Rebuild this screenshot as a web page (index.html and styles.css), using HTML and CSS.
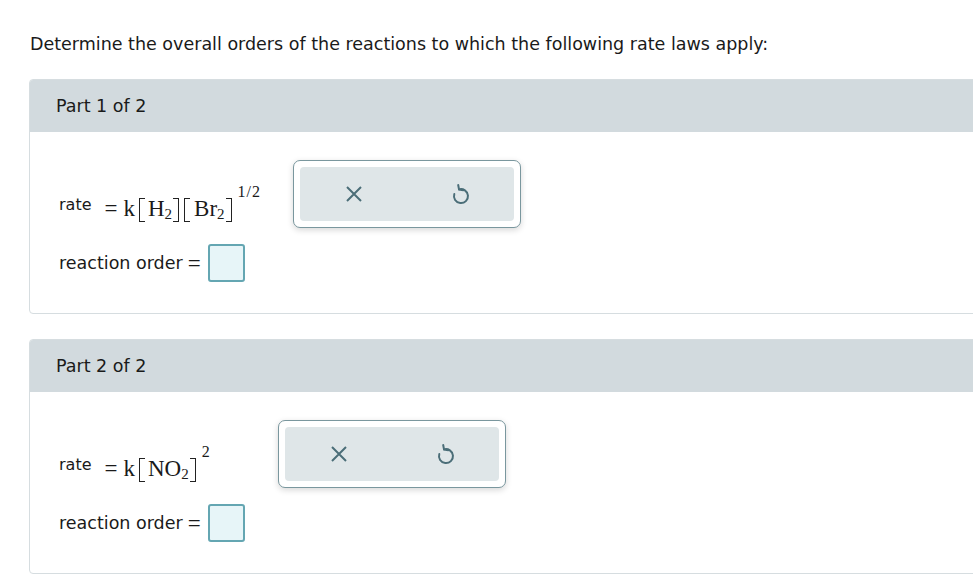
FILE: index.html
```html
<!DOCTYPE html>
<html lang="en">
<head>
<meta charset="utf-8">
<title>Rate laws</title>
<link rel="stylesheet" href="styles.css">
</head>
<body>
<main class="page">
  <p class="prompt">Determine the overall orders of the reactions to which the following rate laws apply:</p>

  <section class="part">
    <header class="part-head">Part 1 of 2</header>
    <div class="part-body">
      <div class="rate-row">
        <div class="expr expr-one">
          <span class="label">rate</span>
          <span class="math"><span class="mo">=</span><span class="mi k">k</span><span class="br br-l"></span><span class="mi">H</span><span class="sub">2</span><span class="br br-r"></span><span class="br br-l br-next"></span><span class="mi">Br</span><span class="sub">2</span><span class="br br-r"></span><span class="sup">1/2</span></span>
        </div>
        <div class="tools">
          <div class="tools-inner">
            <button class="tool" type="button" aria-label="Clear">
              <svg viewBox="0 0 24 24" width="24" height="24"><path d="M5 5 L19 19 M19 5 L5 19" fill="none" stroke="#4b6e78" stroke-width="2"/></svg>
            </button>
            <button class="tool" type="button" aria-label="Reset">
              <svg viewBox="0 0 24 24" width="24" height="24"><path d="M10 7.4 A7 7 0 1 1 5.3 12" fill="none" stroke="#4b6e78" stroke-width="2" stroke-linecap="round"/><path d="M9.2 3 L10 7.4 L14.3 8.2" fill="none" stroke="#4b6e78" stroke-width="2" stroke-linecap="round" stroke-linejoin="round"/></svg>
            </button>
          </div>
        </div>
      </div>
      <div class="answer-row">
        <span class="label">reaction order</span><span class="eq">=</span><span class="answer-box"></span>
      </div>
    </div>
  </section>

  <section class="part">
    <header class="part-head">Part 2 of 2</header>
    <div class="part-body">
      <div class="rate-row">
        <div class="expr expr-two">
          <span class="label">rate</span>
          <span class="math"><span class="mo">=</span><span class="mi k">k</span><span class="br br-l"></span><span class="mi">NO</span><span class="sub">2</span><span class="br br-r"></span><span class="sup">2</span></span>
        </div>
        <div class="tools">
          <div class="tools-inner">
            <button class="tool" type="button" aria-label="Clear">
              <svg viewBox="0 0 24 24" width="24" height="24"><path d="M5 5 L19 19 M19 5 L5 19" fill="none" stroke="#4b6e78" stroke-width="2"/></svg>
            </button>
            <button class="tool" type="button" aria-label="Reset">
              <svg viewBox="0 0 24 24" width="24" height="24"><path d="M10 7.4 A7 7 0 1 1 5.3 12" fill="none" stroke="#4b6e78" stroke-width="2" stroke-linecap="round"/><path d="M9.2 3 L10 7.4 L14.3 8.2" fill="none" stroke="#4b6e78" stroke-width="2" stroke-linecap="round" stroke-linejoin="round"/></svg>
            </button>
          </div>
        </div>
      </div>
      <div class="answer-row">
        <span class="label">reaction order</span><span class="eq">=</span><span class="answer-box"></span>
      </div>
    </div>
  </section>
</main>
</body>
</html>
```

FILE: styles.css
```css
html, body {
  margin: 0;
  padding: 0;
  background: #ffffff;
  overflow: hidden;
}

body {
  font-family: "DejaVu Sans", Verdana, sans-serif;
  font-size: 17.5px;
  color: #1a1a1a;
}

.page {
  padding: 34px 0 0 29px;
}

.prompt {
  margin: 0 0 24px 1px;
  line-height: 21px;
}

.part {
  border: 1px solid #d6dde0;
  border-radius: 4px;
  margin-right: -12px;
  margin-bottom: 25px;
  overflow: hidden;
  background: #fff;
}

.part-head {
  background: #d2dade;
  height: 52px;
  display: flex;
  align-items: center;
  padding-left: 26px;
  line-height: 21px;
}

.part-body {
  padding: 28px 0 31px 29px;
}

.rate-row {
  display: flex;
  align-items: flex-start;
  height: 68px;
}

.expr {
  display: flex;
  align-items: flex-start;
  flex: none;
  white-space: nowrap;
}

.expr-one {
  width: 234px;
}

.expr-two {
  width: 219px;
}

.expr .label {
  font-size: 16px;
  line-height: 19px;
  margin-top: 35px;
}

.math {
  display: flex;
  align-items: flex-start;
  margin-top: 24px;
  font-family: "Liberation Serif", "Times New Roman", serif;
  font-size: 23px;
  line-height: 24px;
}

.mo,
.mi {
  margin-top: 13px;
}

.mo {
  margin-left: 13px;
  margin-right: 6px;
}

.k {
  margin-right: 3px;
}

.br {
  display: block;
  width: 6px;
  height: 24px;
  margin-top: 14px;
  border: 1.4px solid #222;
  box-sizing: border-box;
}

.br-l {
  border-right: none;
  margin-left: 1px;
  margin-right: 3px;
}

.br-r {
  border-left: none;
  margin-left: 1px;
  margin-right: 3px;
}

.br-next {
  margin-left: 2px;
  margin-right: 4px;
}

.sub {
  font-size: 15px;
  line-height: 15px;
  margin-top: 23px;
}

.sup {
  font-size: 16px;
  line-height: 16px;
  margin-top: 0;
  margin-left: 3px;
  letter-spacing: 1px;
}

.tools {
  width: 228px;
  height: 68px;
  box-sizing: border-box;
  border: 1px solid #7a979e;
  border-radius: 7px;
  padding: 6px;
  background: #fff;
  box-shadow: 0 2px 6px rgba(0, 0, 0, 0.16);
  flex: none;
}

.tools-inner {
  display: flex;
  height: 100%;
  background: #dfe6e8;
  border-radius: 4px;
}

.tool {
  flex: 1;
  border: none;
  background: transparent;
  padding: 0;
  display: flex;
  align-items: center;
  justify-content: center;
  cursor: pointer;
}

.tool svg {
  display: block;
}

.answer-row {
  display: flex;
  align-items: center;
  margin-top: 16px;
  height: 38px;
  line-height: 21px;
}

.eq {
  font-family: "Liberation Serif", "Times New Roman", serif;
  font-size: 23px;
  margin: 0 7px 0 5px;
}

.answer-box {
  width: 37px;
  height: 38px;
  box-sizing: border-box;
  border: 2px solid #64a6b2;
  border-radius: 3px;
  background: #e7f5f8;
}
```
